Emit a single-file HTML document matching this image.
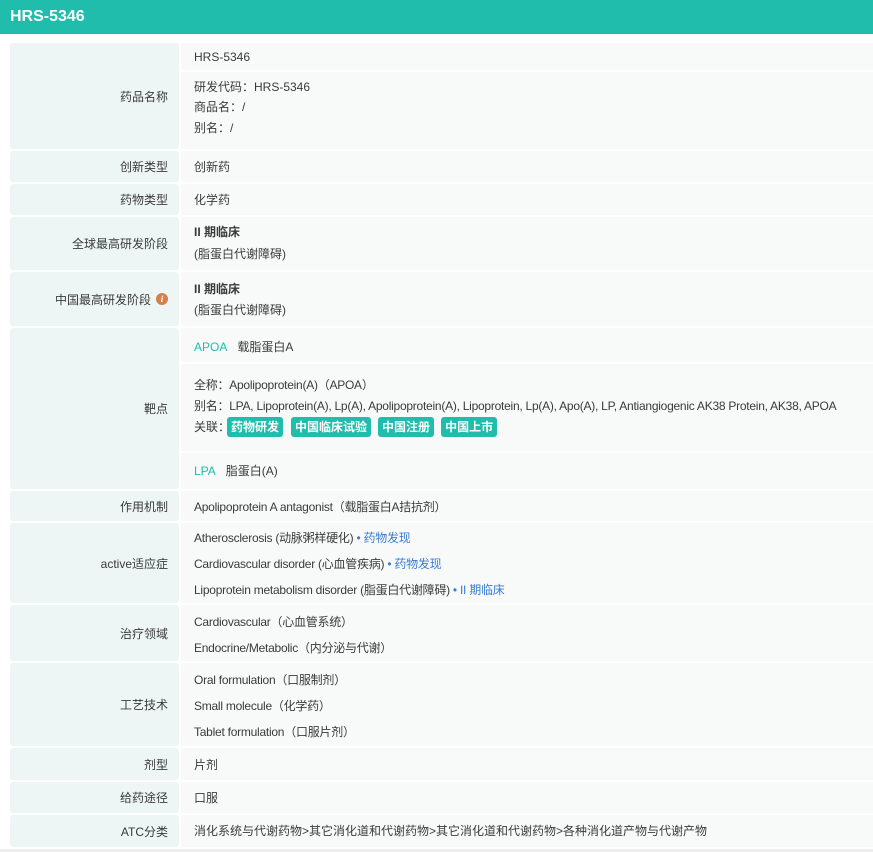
<!DOCTYPE html>
<html><head><meta charset="utf-8"><style>
*{margin:0;padding:0;box-sizing:border-box}
body{width:873px;height:852px;background:#fff;font-family:"Liberation Sans","Noto Sans CJK SC",sans-serif;font-size:12px;color:#3a3a3a;position:relative;overflow:hidden}
.hd{position:absolute;left:0;top:0;width:873px;height:34px;background:#20bcac;color:#fff;font-weight:bold;font-size:16px;line-height:34px;padding-left:10px}
.l{position:absolute;left:10px;width:169px;background:#eef6f5;border-radius:3px;text-align:right;padding-right:11px;display:flex;align-items:center;justify-content:flex-end}
.v{position:absolute;left:181px;width:692px;background:#f8fafa}
.t{position:absolute;left:194px;white-space:nowrap;line-height:16px;transform:translateY(-8px)}
.n{letter-spacing:-0.25px}
.sep{position:absolute;left:181px;width:692px;height:2px;background:#fff}
.b{font-weight:bold}
.g{color:#20bcac}
.bl{color:#3a7bd5}
.tag{display:inline-block;background:#20bcac;color:#fff;border-radius:3px;padding:0 4px;line-height:20px;height:20px;margin-right:5px;font-weight:bold;letter-spacing:0}
.i{display:inline-block;width:12px;height:12px;border-radius:50%;background:#d4804b;color:#fff;font-size:9px;line-height:12px;text-align:center;font-style:italic;margin-left:5px;font-family:"Liberation Serif",serif;font-weight:bold}
.bot{position:absolute;left:0;top:849px;width:873px;height:3px;background:#eee}
</style></head><body>
<div class="hd">HRS-5346</div>

<div class="l" style="top:43px;height:106px">药品名称</div>
<div class="v" style="top:43px;height:106px"></div>
<div class="sep" style="top:70px"></div>
<div class="t" style="top:57px">HRS-5346</div>
<div class="t" style="top:87px">研发代码：HRS-5346</div>
<div class="t" style="top:107px">商品名：/</div>
<div class="t" style="top:128px">别名：/</div>

<div class="l" style="top:151px;height:31px">创新类型</div>
<div class="v" style="top:151px;height:31px"></div>
<div class="t" style="top:167px">创新药</div>

<div class="l" style="top:184px;height:31px">药物类型</div>
<div class="v" style="top:184px;height:31px"></div>
<div class="t" style="top:200px">化学药</div>

<div class="l" style="top:217px;height:53px">全球最高研发阶段</div>
<div class="v" style="top:217px;height:53px"></div>
<div class="t b" style="top:232px">II 期临床</div>
<div class="t" style="top:254px">(脂蛋白代谢障碍)</div>

<div class="l" style="top:272px;height:54px">中国最高研发阶段<span class="i">i</span></div>
<div class="v" style="top:272px;height:54px"></div>
<div class="t b" style="top:289px">II 期临床</div>
<div class="t" style="top:310px">(脂蛋白代谢障碍)</div>

<div class="l" style="top:328px;height:161px">靶点</div>
<div class="v" style="top:328px;height:161px"></div>
<div class="sep" style="top:362px"></div>
<div class="sep" style="top:451px"></div>
<div class="t" style="top:347px"><span class="g">APOA</span>&nbsp;&nbsp; 载脂蛋白A</div>
<div class="t n" style="top:385px">全称：Apolipoprotein(A)（APOA）</div>
<div class="t n" style="top:406px">别名：LPA, Lipoprotein(A), Lp(A), Apolipoprotein(A), Lipoprotein, Lp(A), Apo(A), LP, Antiangiogenic AK38 Protein, AK38, APOA</div>
<div class="t" style="top:427px;line-height:20px;transform:translateY(-10px)">关联：<span class="tag" style="margin-left:-3px">药物研发</span><span class="tag" style="margin-left:3px">中国临床试验</span><span class="tag" style="margin-left:2px">中国注册</span><span class="tag" style="margin-left:2px">中国上市</span></div>
<div class="t" style="top:471px"><span class="g">LPA</span>&nbsp;&nbsp; 脂蛋白(A)</div>

<div class="l" style="top:491px;height:30px">作用机制</div>
<div class="v" style="top:491px;height:30px"></div>
<div class="t n" style="top:507px">Apolipoprotein A antagonist（载脂蛋白A拮抗剂）</div>

<div class="l" style="top:523px;height:80px">active适应症</div>
<div class="v" style="top:523px;height:80px"></div>
<div class="t n" style="top:538px">Atherosclerosis (动脉粥样硬化) <span class="bl">• 药物发现</span></div>
<div class="t n" style="top:564px">Cardiovascular disorder (心血管疾病) <span class="bl">• 药物发现</span></div>
<div class="t n" style="top:590px">Lipoprotein metabolism disorder (脂蛋白代谢障碍) <span class="bl">• II 期临床</span></div>

<div class="l" style="top:605px;height:56px">治疗领域</div>
<div class="v" style="top:605px;height:56px"></div>
<div class="t n" style="top:622px">Cardiovascular（心血管系统）</div>
<div class="t n" style="top:648px">Endocrine/Metabolic（内分泌与代谢）</div>

<div class="l" style="top:663px;height:83px">工艺技术</div>
<div class="v" style="top:663px;height:83px"></div>
<div class="t n" style="top:680px">Oral formulation（口服制剂）</div>
<div class="t n" style="top:706px">Small molecule（化学药）</div>
<div class="t n" style="top:732px">Tablet formulation（口服片剂）</div>

<div class="l" style="top:748px;height:32px">剂型</div>
<div class="v" style="top:748px;height:32px"></div>
<div class="t" style="top:765px">片剂</div>

<div class="l" style="top:782px;height:31px">给药途径</div>
<div class="v" style="top:782px;height:31px"></div>
<div class="t" style="top:798px">口服</div>

<div class="l" style="top:815px;height:32px">ATC分类</div>
<div class="v" style="top:815px;height:32px"></div>
<div class="t" style="top:831px">消化系统与代谢药物&gt;其它消化道和代谢药物&gt;其它消化道和代谢药物&gt;各种消化道产物与代谢产物</div>
<div class="bot"></div>
</body></html>
